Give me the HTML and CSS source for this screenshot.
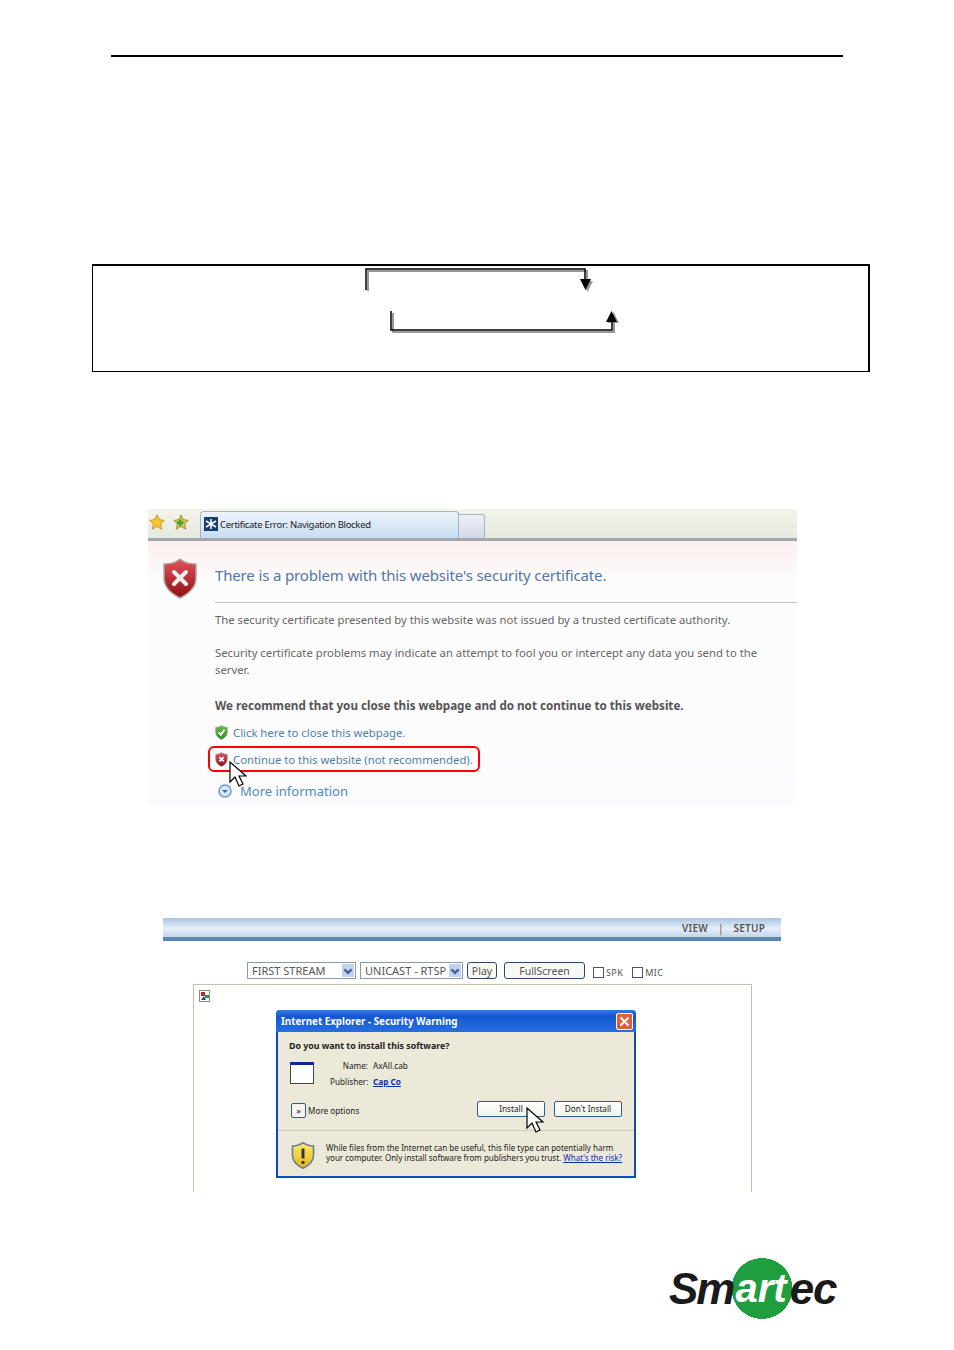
FILE: index.html
```html
<!DOCTYPE html>
<html lang="en">

<head>
    <meta charset="UTF-8" />
    <title>Certificate install steps</title>
    <link rel="stylesheet" href="styles.css">
</head>

<body>
    <svg class="defs" width="0" height="0">
        <defs>
            <linearGradient id="red" x1="0" y1="0" x2="0" y2="1">
                <stop offset="0" stop-color="#e2545a" />
                <stop offset="1" stop-color="#8e0f14" />
            </linearGradient>
            <linearGradient id="green" x1="0" y1="0" x2="0" y2="1">
                <stop offset="0" stop-color="#6cc04a" />
                <stop offset="1" stop-color="#2c8a2c" />
            </linearGradient>
            <linearGradient id="yellow" x1="0" y1="0" x2="0" y2="1">
                <stop offset="0" stop-color="#fbe96a" />
                <stop offset="1" stop-color="#e6b810" />
            </linearGradient>
            <path id="shield" d="M18 1 C13 5 7 6 2 6 L2 20 C2 30 10 36 18 40 C26 36 34 30 34 20 L34 6 C29 6 23 5 18 1 Z" />
            <path id="pointer" d="M1 1 L1 21 L6 16 L10 25 L14 23 L10 15 L17 15 Z" />
            <path id="chevron" d="M2 3 L5 6 L8 3" />
        </defs>
    </svg>

    <div class="top-rule"></div>

    <!-- diagram box, the labels are not visible in the scan -->
    <div class="flow-box">
        <svg class="flow-arrows" width="775" height="105" viewBox="-1 0 775 105">
            <g class="arrow-shadow">
                <path d="M274 25 V5 H493 V16" />
                <path d="M299 47 V66 H520 V56" />
                <polygon points="488,15 499,15 493.500,26" />
                <polygon points="514,57 525,57 519.500,46" />
            </g>
            <g class="arrow-line">
                <path d="M272 24 V3 H491 V14" />
                <path d="M297 45 V64 H518 V54" />
                <polygon points="486,13 497,13 491.500,24" />
                <polygon points="512,56 523,56 517.500,45" />
            </g>
        </svg>
    </div>

    <!-- IE certificate error page -->
    <div class="cert-shot">
        <div class="tab-bar">
            <svg class="fav-icon" width="16" height="16" viewBox="0 0 20 20">
                <polygon points="10,1 13,7 19,8 14.500,12.500 16,19 10,15.500 4,19 5.500,12.500 1,8 7,7" fill="#f5c431" stroke="#c58a16" />
            </svg>
            <svg class="fav-icon" width="16" height="16" viewBox="0 0 20 20">
                <polygon points="10,1 13,7 19,8 14.500,12.500 16,19 10,15.500 4,19 5.500,12.500 1,8 7,7" fill="#dcc04a" stroke="#8c8a2c" />
                <path d="M5 11 H13 M9 7 V15" stroke="#3aa53a" stroke-width="3" />
            </svg>
            <div class="tab">
                <svg width="14" height="14" viewBox="0 0 14 14">
                    <rect width="14" height="14" fill="#17406e" />
                    <path d="M7 2 V12 M2 4 L12 10 M12 4 L2 10" stroke="#fff" stroke-width="1.500" />
                </svg>
                <span>Certificate Error: Navigation Blocked</span>
            </div>
            <div class="tab-new"></div>
        </div>
        <div class="cert-body">
            <svg class="cert-shield" width="36" height="41" viewBox="0 0 36 41">
                <use href="#shield" fill="url(#red)" stroke="#a9a9a9" stroke-width="1.500" />
                <path d="M12 14 L24 26 M24 14 L12 26" stroke="#eee" stroke-width="4" stroke-linecap="round" />
            </svg>
            <div class="cert-text">
                <h1 class="cert-title">There is a problem with this website's security certificate.</h1>
                <p class="cert-line first">The security certificate presented by this website was not issued by a trusted certificate authority.</p>
                <p class="cert-line para">Security certificate problems may indicate an attempt to fool you or intercept any data you send to the server.</p>
                <p class="cert-line warn">We recommend that you close this webpage and do not continue to this website.</p>
                <div class="cert-link close-link">
                    <svg width="13" height="15" viewBox="0 0 36 41">
                        <use href="#shield" fill="url(#green)" stroke="#999" stroke-width="2" />
                        <path d="M10 20 L16 27 L26 13" fill="none" stroke="#fff" stroke-width="5" />
                    </svg>
                    <span>Click here to close this webpage.</span>
                </div>
                <div class="cert-link go-link">
                    <svg width="13" height="15" viewBox="0 0 36 41">
                        <use href="#shield" fill="url(#red)" stroke="#999" stroke-width="2" />
                        <path d="M12 14 L24 26 M24 14 L12 26" stroke="#fff" stroke-width="5" />
                    </svg>
                    <span>Continue to this website (not recommended).</span>
                    <svg class="pointer pointer-go" width="18" height="26" viewBox="0 0 18 26">
                        <use href="#pointer" fill="#fff" stroke="#000" stroke-width="1.200" />
                    </svg>
                </div>
                <div class="more-info">
                    <svg width="14" height="14" viewBox="0 0 14 14">
                        <circle cx="7" cy="7" r="6" fill="#d5e6f5" stroke="#6f9cc6" stroke-width="1.500" />
                        <path d="M4 6 L7 9 L10 6 Z" fill="#2f6fa8" />
                    </svg>
                    <span>More information</span>
                </div>
            </div>
        </div>
    </div>

    <!-- viewer with activex prompt -->
    <div class="viewer-shot">
        <div class="viewer-head">
            <span>VIEW</span>
            <span class="head-sep">|</span>
            <span>SETUP</span>
        </div>
        <div class="viewer-controls">
            <div class="select select-stream">
                <span>FIRST STREAM</span>
                <svg class="select-btn" width="12" height="13" viewBox="0 -1 10 10"><use href="#chevron" /></svg>
            </div>
            <div class="select select-cast">
                <span>UNICAST - RTSP</span>
                <svg class="select-btn" width="12" height="13" viewBox="0 -1 10 10"><use href="#chevron" /></svg>
            </div>
            <div class="btn btn-play">Play</div>
            <div class="btn btn-full">FullScreen</div>
            <label class="check"><i></i>SPK</label>
            <label class="check"><i></i>MIC</label>
        </div>
        <div class="viewer-frame">
            <svg class="broken-img" width="11" height="12" viewBox="0 0 11 12">
                <rect x="0.500" y="0.500" width="10" height="11" fill="#fff" stroke="#888" />
                <rect x="2" y="2" width="4" height="4" fill="#b3282d" />
                <path d="M2 10 L5 6 L7 10 Z" fill="#1f3fa8" />
                <rect x="6" y="5" width="4" height="3" fill="#2c9a3a" />
            </svg>
            <div class="dialog">
                <div class="dialog-title">
                    <span>Internet Explorer - Security Warning</span>
                    <div class="dialog-close">
                        <svg width="11" height="11" viewBox="0 0 11 11">
                            <path d="M1.500 1.500 L9.500 9.500 M9.500 1.500 L1.500 9.500" stroke="#fff" stroke-width="2" />
                        </svg>
                    </div>
                </div>
                <div class="dialog-body">
                    <div class="dialog-ask">Do you want to install this software?</div>
                    <div class="dialog-info">
                        <div class="win-icon"></div>
                        <div class="info-table">
                            <span class="info-key">Name:</span><span>AxAll.cab</span>
                            <span class="info-key">Publisher:</span><a class="info-link">Cap Co</a>
                        </div>
                    </div>
                    <div class="dialog-actions">
                        <div class="more-btn">&#187;</div>
                        <span class="more-label">More options</span>
                        <div class="xp-btn btn-install">
                            Install
                            <svg class="pointer pointer-install" width="18" height="26" viewBox="0 0 18 26">
                                <use href="#pointer" fill="#fff" stroke="#000" stroke-width="1.200" />
                            </svg>
                        </div>
                        <div class="xp-btn">Don't Install</div>
                    </div>
                    <div class="dialog-note">
                        <svg width="24" height="27" viewBox="0 0 36 41">
                            <use href="#shield" fill="url(#yellow)" stroke="#6a7fa0" stroke-width="2.500" />
                            <path d="M18 10 V25" stroke="#333" stroke-width="4.500" />
                            <circle cx="18" cy="31" r="2.500" fill="#333" />
                        </svg>
                        <div class="note-text">
                            <div>While files from the Internet can be useful, this file type can potentially harm</div>
                            <div>your computer. Only install software from publishers you trust. <a>What's the risk?</a></div>
                        </div>
                    </div>
                </div>
            </div>
        </div>
    </div>

    <div class="logo">
        <span class="logo-dark logo-s">Sm</span><span class="logo-light">art</span><span class="logo-dark">ec</span>
    </div>
</body>

</html>
```

FILE: styles.css
```css
body {
    margin: 0;
    padding-top: 55px;
    background-color: #fff;
    font-family: 'Noto Sans', sans-serif;
    color: #000;
}

.defs {
    display: block;
    height: 0;
}

.top-rule {
    width: 732px;
    height: 2px;
    margin-left: 111px;
    background-color: #000;
}

/* Diagram box */
.flow-box {
    width: 775px;
    height: 105px;
    margin: 207px 0 0 92px;
    border: solid #000;
    border-width: 2px 2px 1px 1px;
}

.flow-arrows {
    display: block;
}

.arrow-shadow path {
    fill: none;
    stroke: #999;
    stroke-width: 2;
}

.arrow-shadow polygon {
    fill: #999;
}

.arrow-line path {
    fill: none;
    stroke: #000;
    stroke-width: 1.500;
}

.arrow-line polygon {
    fill: #000;
}

/* Certificate error screenshot */
.cert-shot {
    width: 649px;
    height: 296px;
    margin: 137px 0 0 148px;
    background-color: #fbfbfd;
    overflow: hidden;
}

.tab-bar {
    display: flex;
    align-items: flex-end;
    height: 32px;
    padding-left: 1px;
    box-sizing: border-box;
    background: linear-gradient(#f3f5ec, #e6e9df);
    border-bottom: 3px solid #a2a6ad;
}

.fav-icon {
    margin-bottom: 8px;
}

.fav-icon + .fav-icon {
    margin-left: 8px;
}

.tab {
    display: flex;
    align-items: center;
    gap: 2px;
    width: 259px;
    height: 27px;
    margin-left: 11px;
    padding: 0 0 2px 3px;
    box-sizing: border-box;
    border: 1px solid #a8b2c0;
    border-bottom: none;
    border-radius: 4px 4px 0 0;
    background: linear-gradient(#eef4fb, #c7dcf3);
    font-size: 9.500px;
    letter-spacing: -0.300px;
    color: #222;
    white-space: nowrap;
}

.tab-new {
    width: 25px;
    height: 23px;
    border: 1px solid #a8b2c0;
    border-bottom: none;
    border-left: none;
    border-radius: 0 3px 0 0;
    background: linear-gradient(#eef0f6, #d3d8e6);
}

.cert-body {
    display: grid;
    grid-template-columns: 67px 1fr;
    height: 264px;
    background: linear-gradient(#fdeeee, #fdfcfc 40px, #fbfbfd 100%);
}

.cert-shield {
    margin: 17px 0 0 14px;
}

.cert-text {
    padding-top: 24px;
    font-size: 11.300px;
    color: #666;
}

.cert-title {
    margin: 0;
    padding-bottom: 17px;
    border-bottom: 1px solid #c6c6c6;
    font-size: 15px;
    line-height: 20px;
    font-weight: 400;
    letter-spacing: -0.150px;
    color: #5176ab;
}

.cert-line {
    margin: 0;
    width: 560px;
    line-height: 17px;
}

.cert-line.first {
    margin-top: 8px;
}

.cert-line.para {
    margin-top: 16px;
}

.cert-line.warn {
    margin-top: 19px;
    font-size: 11.650px;
    font-weight: 700;
    color: #555;
    white-space: nowrap;
}

.cert-link {
    display: flex;
    align-items: center;
    gap: 5px;
    color: #4f81a8;
    white-space: nowrap;
}

.cert-link svg {
    flex-shrink: 0;
}

.close-link {
    margin-top: 10px;
    height: 17px;
}

.go-link {
    position: relative;
    width: 272px;
    height: 26px;
    margin: 5px 0 0 -7px;
    padding-left: 5px;
    box-sizing: border-box;
    border: 2px solid #f00;
    border-radius: 6px;
}

.pointer {
    position: absolute;
}

.pointer-go {
    left: 19px;
    top: 13px;
}

.more-info {
    display: flex;
    align-items: center;
    gap: 8px;
    margin: 10px 0 0 3px;
    font-size: 13px;
    color: #4f8bbf;
}

/* Viewer screenshot */
.viewer-shot {
    width: 618px;
    height: 274px;
    margin: 113px 0 0 163px;
    overflow: hidden;
}

.viewer-head {
    display: flex;
    justify-content: flex-end;
    align-items: center;
    gap: 10px;
    height: 19px;
    padding-right: 16px;
    border-bottom: 4px solid #5a86bd;
    background: linear-gradient(#a8c4e2, #e6eff8 55%, #c3d6ea);
    font-size: 10px;
    font-weight: 600;
    letter-spacing: 0.200px;
    color: #555;
}

.head-sep {
    font-weight: 400;
}

.viewer-controls {
    display: flex;
    align-items: center;
    height: 17px;
    margin: 21px 0 0 84px;
    font-size: 10.500px;
    color: #555;
}

.select {
    display: flex;
    align-items: center;
    justify-content: space-between;
    height: 17px;
    padding: 0 1px 0 4px;
    box-sizing: border-box;
    border: 1px solid #8b9aa8;
    font-size: 11px;
    white-space: nowrap;
}

.select-stream {
    width: 109px;
}

.select-cast {
    width: 103px;
    margin-left: 4px;
}

.select-btn {
    flex-shrink: 0;
    background-color: #c3d3ee;
    fill: none;
    stroke: #3f5f9f;
    stroke-width: 2;
}

.btn {
    display: flex;
    align-items: center;
    justify-content: center;
    height: 15px;
    border: 1px solid #2b4a6a;
    border-radius: 3px;
    background-color: #f8f8f4;
}

.btn-play {
    width: 28px;
    margin-left: 4px;
}

.btn-full {
    width: 79px;
    margin-left: 7px;
}

.check {
    display: flex;
    align-items: center;
    gap: 2px;
    margin: 3px 0 0 8px;
    font-size: 9px;
    letter-spacing: 0.400px;
}

.check + .check {
    margin-left: 9px;
}

.check i {
    width: 9px;
    height: 9px;
    border: 1px solid #555;
}

.viewer-frame {
    width: 557px;
    height: 208px;
    margin: 5px 0 0 30px;
    padding-top: 5px;
    border: 1px solid #c4c0ac;
    border-bottom: none;
}

.broken-img {
    display: block;
    margin-left: 5px;
}

.dialog {
    width: 360px;
    height: 168px;
    margin: 8px 0 0 82px;
    box-sizing: border-box;
    border: 2px solid #0f4cc0;
    border-top: none;
    border-radius: 4px 4px 0 0;
    background-color: #ece9d8;
}

.dialog-title {
    display: flex;
    align-items: center;
    justify-content: space-between;
    height: 22px;
    margin: 0 -2px;
    padding: 0 3px 0 5px;
    border-radius: 4px 4px 0 0;
    background: linear-gradient(#2e7be0, #1257d0 30%, #2a6fe0);
    font-size: 9.800px;
    font-weight: 700;
    color: #fff;
    white-space: nowrap;
}

.dialog-close {
    display: flex;
    align-items: center;
    justify-content: center;
    width: 15px;
    height: 15px;
    border: 1px solid #fff;
    border-radius: 2px;
    background-color: #e0603a;
}

.dialog-body {
    font-size: 8.200px;
    color: #222;
}

.dialog-ask {
    padding: 8px 0 0 11px;
    font-size: 8.800px;
    font-weight: 700;
    line-height: 12px;
}

.dialog-info {
    display: flex;
    margin-top: 8px;
    padding-left: 12px;
}

.win-icon {
    width: 24px;
    height: 22px;
    margin-top: 2px;
    border: 1px solid #444;
    border-top: 3px solid #0a2a9a;
    box-sizing: border-box;
    background-color: #fff;
}

.info-table {
    display: grid;
    grid-template-columns: 38px auto;
    column-gap: 5px;
    row-gap: 4px;
    margin-left: 16px;
    line-height: 12px;
}

.info-key {
    text-align: right;
}

.info-link {
    font-weight: 700;
    color: #0c2fa8;
    text-decoration: underline;
}

.dialog-actions {
    display: flex;
    align-items: center;
    height: 17px;
    margin-top: 14px;
    padding-left: 13px;
}

.more-btn {
    display: flex;
    align-items: center;
    justify-content: center;
    width: 13px;
    height: 13px;
    border: 1px solid #3a5a80;
    border-radius: 2px;
    font-size: 9px;
    background-color: #f6f6ee;
}

.more-label {
    width: 169px;
    margin-left: 2px;
}

.xp-btn {
    position: relative;
    display: flex;
    align-items: center;
    justify-content: center;
    flex-shrink: 0;
    width: 68px;
    height: 16px;
    margin: -4px 9px 0 0;
    box-sizing: border-box;
    border: 1px solid #2f5f9a;
    border-radius: 2px;
    background: linear-gradient(#fff, #f2f2ea);
    white-space: nowrap;
}

.pointer-install {
    left: 48px;
    top: 5px;
}

.dialog-note {
    display: flex;
    margin-top: 11px;
    padding: 11px 10px 0 13px;
    border-top: 1px solid #d0cdbc;
    font-size: 8px;
    line-height: 10px;
}

.dialog-note svg {
    flex-shrink: 0;
}

.note-text {
    margin: 1px 0 0 11px;
    white-space: nowrap;
}

.dialog-note a {
    color: #0c2fa8;
    text-decoration: underline;
}

/* Logo */
.logo {
    display: flex;
    align-items: center;
    width: 174px;
    height: 61px;
    margin: 66px 0 0 669px;
    font-family: 'Liberation Sans', sans-serif;
    font-size: 44px;
    font-style: italic;
    font-weight: 700;
    letter-spacing: -1px;
    background: radial-gradient(circle 30.500px at 93px 30.500px, #1f9e3f 99%, transparent 100%);
}

.logo-dark {
    color: #1a1a1a;
}

.logo-s {
    letter-spacing: -2px;
}

.logo-light {
    margin-left: 2px;
    letter-spacing: 0;
    font-size: 40px;
    color: #fff;
}

.logo-light + .logo-dark {
    margin-left: 3px;
}
```
